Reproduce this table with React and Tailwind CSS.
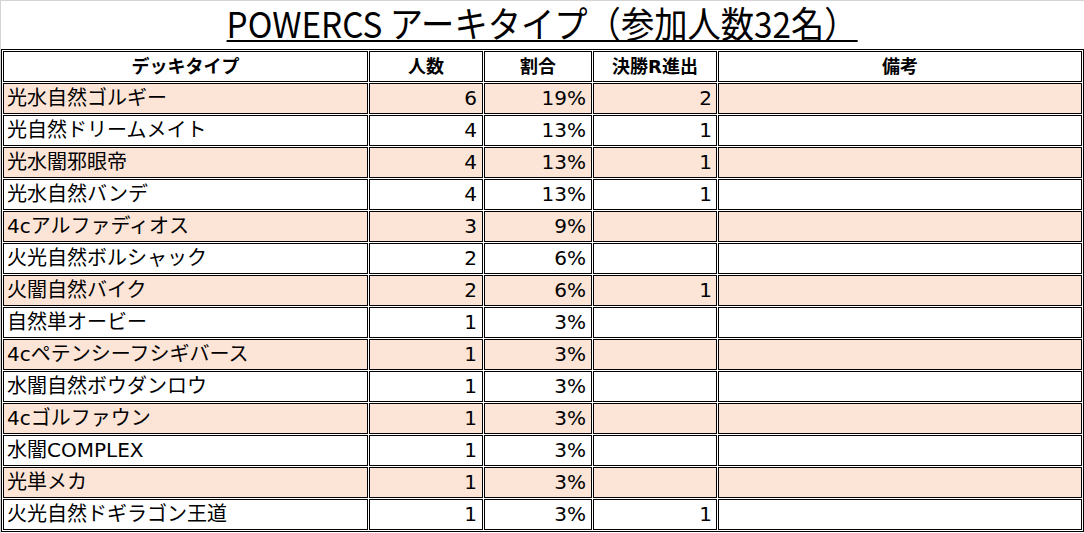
import React from "react";

const rows = [
  ["光水自然ゴルギー", "6", "19%", "2"],
  ["光自然ドリームメイト", "4", "13%", "1"],
  ["光水闇邪眼帝", "4", "13%", "1"],
  ["光水自然バンデ", "4", "13%", "1"],
  ["4cアルファディオス", "3", "9%", ""],
  ["火光自然ボルシャック", "2", "6%", ""],
  ["火闇自然バイク", "2", "6%", "1"],
  ["自然単オービー", "1", "3%", ""],
  ["4cペテンシーフシギバース", "1", "3%", ""],
  ["水闇自然ボウダンロウ", "1", "3%", ""],
  ["4cゴルファウン", "1", "3%", ""],
  ["水闇COMPLEX", "1", "3%", ""],
  ["光単メカ", "1", "3%", ""],
  ["火光自然ドギラゴン王道", "1", "3%", "1"],
];

const App = () => {
  return (
    <div className="w-[1084px] h-[533px] overflow-hidden bg-white border-t border-l border-[#d4d4d4] text-black">
      <div className="h-[48px] flex items-start justify-center">
        <h1 className="font-['Noto_Sans_CJK_JP',sans-serif] text-[36px] leading-[43px] underline decoration-2 underline-offset-[2px] scale-x-[0.925] whitespace-nowrap">
          POWERCS アーキタイプ（参加人数32名）
        </h1>
      </div>
      <table className="font-['DejaVu_Sans','Noto_Sans_CJK_JP',sans-serif] table-fixed border-separate border-spacing-px border border-black text-[20px]">
        <thead>
          <tr className="bg-white">
            <th className="w-[365px] h-[31px] p-0 leading-[29px] border border-black font-bold text-[18px]">デッキタイプ</th>
            <th className="w-[114px] h-[31px] p-0 leading-[29px] border border-black font-bold text-[18px]">人数</th>
            <th className="w-[108px] h-[31px] p-0 leading-[29px] border border-black font-bold text-[18px]">割合</th>
            <th className="w-[124px] h-[31px] p-0 leading-[29px] border border-black font-bold text-[18px]">決勝R進出</th>
            <th className="w-[364px] h-[31px] p-0 leading-[29px] border border-black font-bold text-[18px]">備考</th>
          </tr>
        </thead>
        <tbody>
          {rows.map((r, i) => (
            <tr key={i} className={i % 2 === 0 ? "bg-[#fce4d6]" : "bg-white"}>
              <td className="h-[31px] py-0 pl-[3px] leading-[29px] border border-black whitespace-nowrap">{r[0]}</td>
              <td className="h-[31px] py-0 pr-[5px] leading-[29px] border border-black text-right">{r[1]}</td>
              <td className="h-[31px] py-0 pr-[5px] leading-[29px] border border-black text-right">{r[2]}</td>
              <td className="h-[31px] py-0 pr-[4px] leading-[29px] border border-black text-right">{r[3]}</td>
              <td className="h-[31px] p-0 border border-black"></td>
            </tr>
          ))}
        </tbody>
      </table>
    </div>
  );
};

export default App;
